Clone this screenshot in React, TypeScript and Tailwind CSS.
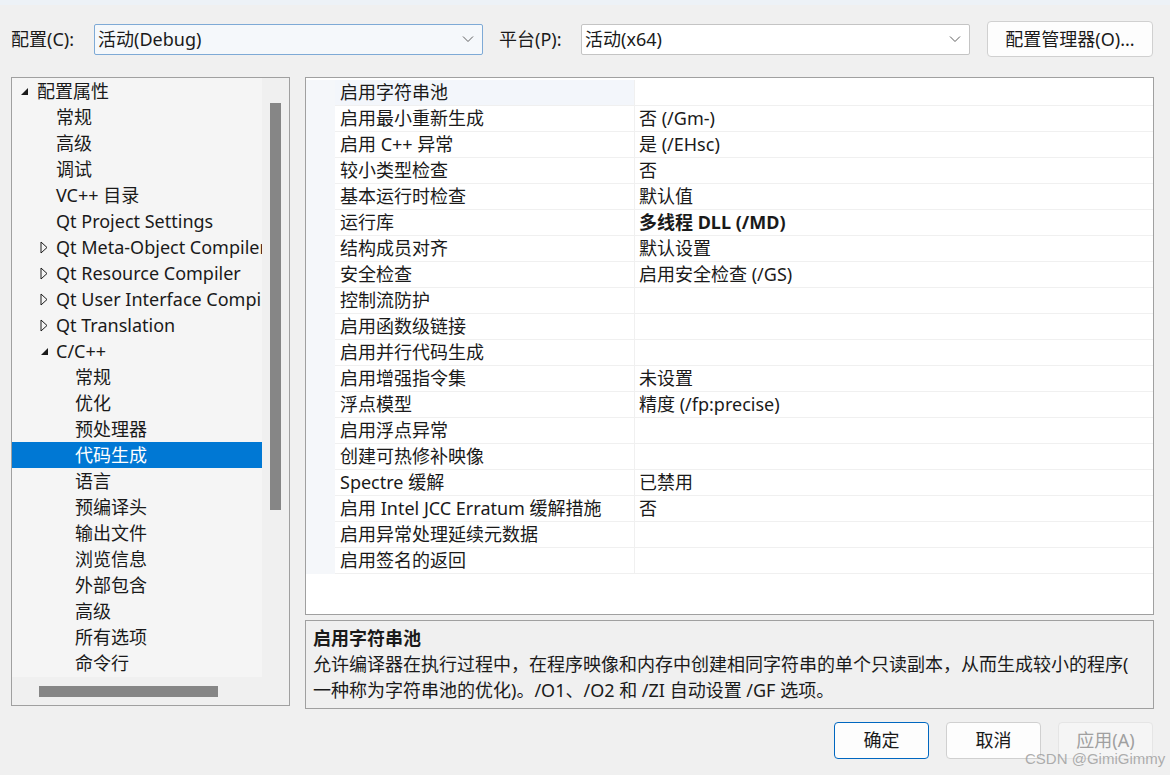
import React from 'react';

const font = { fontFamily: '"Noto Sans", "Noto Sans CJK SC", sans-serif' };

type TreeItem = { label: string; level: number; arrow?: 'open' | 'closed'; selected?: boolean };

const tree: TreeItem[] = [
    { label: '配置属性', level: 0, arrow: 'open' },
    { label: '常规', level: 1 },
    { label: '高级', level: 1 },
    { label: '调试', level: 1 },
    { label: 'VC++ 目录', level: 1 },
    { label: 'Qt Project Settings', level: 1 },
    { label: 'Qt Meta-Object Compiler', level: 1, arrow: 'closed' },
    { label: 'Qt Resource Compiler', level: 1, arrow: 'closed' },
    { label: 'Qt User Interface Compiler', level: 1, arrow: 'closed' },
    { label: 'Qt Translation', level: 1, arrow: 'closed' },
    { label: 'C/C++', level: 1, arrow: 'open' },
    { label: '常规', level: 2 },
    { label: '优化', level: 2 },
    { label: '预处理器', level: 2 },
    { label: '代码生成', level: 2, selected: true },
    { label: '语言', level: 2 },
    { label: '预编译头', level: 2 },
    { label: '输出文件', level: 2 },
    { label: '浏览信息', level: 2 },
    { label: '外部包含', level: 2 },
    { label: '高级', level: 2 },
    { label: '所有选项', level: 2 },
    { label: '命令行', level: 2 },
];

const props: { name: string; value: string; bold?: boolean }[] = [
    { name: '启用字符串池', value: '' },
    { name: '启用最小重新生成', value: '否 (/Gm-)' },
    { name: '启用 C++ 异常', value: '是 (/EHsc)' },
    { name: '较小类型检查', value: '否' },
    { name: '基本运行时检查', value: '默认值' },
    { name: '运行库', value: '多线程 DLL (/MD)', bold: true },
    { name: '结构成员对齐', value: '默认设置' },
    { name: '安全检查', value: '启用安全检查 (/GS)' },
    { name: '控制流防护', value: '' },
    { name: '启用函数级链接', value: '' },
    { name: '启用并行代码生成', value: '' },
    { name: '启用增强指令集', value: '未设置' },
    { name: '浮点模型', value: '精度 (/fp:precise)' },
    { name: '启用浮点异常', value: '' },
    { name: '创建可热修补映像', value: '' },
    { name: 'Spectre 缓解', value: '已禁用' },
    { name: '启用 Intel JCC Erratum 缓解措施', value: '否' },
    { name: '启用异常处理延续元数据', value: '' },
    { name: '启用签名的返回', value: '' },
];

function Chevron() {
    return (
        <svg width="12" height="8" viewBox="0 0 12 8" className="mr-[8px] shrink-0">
            <path d="M1 1.5 L6 6.5 L11 1.5" fill="none" stroke="#5f5f5f" strokeWidth="1" />
        </svg>
    );
}

function Combo({ text, focused }: { text: string; focused?: boolean }) {
    return (
        <div
            className={`w-[389px] h-[31px] flex items-center justify-between pl-[3px] rounded-[2px] border ${focused ? 'border-[#7eaad6] bg-[#f5f8fb]' : 'border-[#c4c4c4] bg-white'}`}
        >
            <span>{text}</span>
            <Chevron />
        </div>
    );
}

function Arrow({ kind }: { kind: 'open' | 'closed' }) {
    if (kind === 'open') {
        return (
            <svg width="9" height="9" viewBox="0 0 9 9" className="shrink-0">
                <path d="M8 1 L8 8 L1 8 Z" fill="#1a1a1a" />
            </svg>
        );
    }
    return (
        <svg width="8" height="13" viewBox="0 0 8 13" className="shrink-0">
            <path d="M1 1 L7 6.5 L1 12 Z" fill="none" stroke="#1a1a1a" strokeWidth="1" />
        </svg>
    );
}

// indent widths measured from the tree's left edge
const indent = ['w-[25px] pl-[8px]', 'w-[44px] pl-[28px]', 'w-[63px]'];

export default function App() {
    return (
        <div className="w-[1170px] h-[775px] bg-[#f0f0f0] text-[18px] text-[#1a1a1a] relative overflow-hidden" style={font}>
            <div className="h-[5px] bg-[#edf2f7]" />

            {/* toolbar */}
            <div className="mt-[16px] h-[36px] flex items-center">
                <span className="ml-[11px] w-[83px]">配置(C):</span>
                <Combo text="活动(Debug)" focused />
                <span className="ml-[16px] w-[82px]">平台(P):</span>
                <Combo text="活动(x64)" />
                <button className="ml-[17px] w-[166px] h-[36px] bg-[#fdfdfd] border border-[#d0d0d0] rounded-[4px] text-[18px]">
                    配置管理器(O)...
                </button>
            </div>

            <div className="mt-[20px] flex">
                {/* tree panel */}
                <div className="ml-[11px] w-[279px] h-[629px] border border-[#a0a0a0] flex flex-col">
                    <div className="flex flex-1 min-h-0">
                        <div className="w-[250px] bg-[#f5f5f5] overflow-hidden">
                            {tree.map((t, i) => (
                                <div
                                    key={i}
                                    className={`h-[26px] flex items-center whitespace-nowrap ${t.selected ? 'bg-[#0078d4] text-white' : ''}`}
                                >
                                    <div className={`shrink-0 flex items-center ${indent[t.level]}`}>
                                        {t.arrow && <Arrow kind={t.arrow} />}
                                    </div>
                                    <span className="shrink-0">{t.label}</span>
                                </div>
                            ))}
                        </div>
                        <div className="flex-1 bg-[#f0f0f0] flex justify-center pt-[25px]">
                            <div className="w-[11px] h-[407px] bg-[#868686]" />
                        </div>
                    </div>
                    <div className="h-[28px] bg-[#f0f0f0] flex items-center">
                        <div className="ml-[27px] w-[179px] h-[11px] bg-[#868686]" />
                    </div>
                </div>

                {/* right column */}
                <div className="ml-[15px] w-[849px] flex flex-col gap-[5px]">
                    <div className="h-[538px] bg-white border border-[#a0a0a0] pt-[2px]">
                        {props.map((p, i) => (
                            <div key={i} className="h-[26px] flex">
                                <div className="w-[29px] bg-[#f5f7fa]" />
                                <div
                                    className={`w-[299px] flex items-center pl-[5px] border-b border-[#f0f0f0] whitespace-nowrap ${i === 0 ? 'bg-[#f3f6fb]' : ''}`}
                                >
                                    {p.name}
                                </div>
                                <div
                                    className={`flex-1 flex items-center pl-[4px] border-b border-l border-[#f0f0f0] ${p.bold ? 'font-bold' : ''}`}
                                >
                                    {p.value}
                                </div>
                            </div>
                        ))}
                    </div>
                    <div className="h-[89px] border border-[#a0a0a0] bg-[#f0f0f0] px-[7px] pt-[4px] leading-[26px] overflow-hidden">
                        <div className="font-bold">启用字符串池</div>
                        <div className="whitespace-nowrap">
                            允许编译器在执行过程中，在程序映像和内存中创建相同字符串的单个只读副本，从而生成较小的程序(
                        </div>
                        <div className="whitespace-nowrap">一种称为字符串池的优化)。/O1、/O2 和 /ZI 自动设置 /GF 选项。</div>
                    </div>
                </div>
            </div>

            {/* bottom buttons */}
            <div className="mt-[13px] flex justify-end gap-[17px] pr-[17px]">
                <button className="w-[95px] h-[37px] bg-[#fdfdfd] border border-[#0067c0] rounded-[4px] text-[18px]">确定</button>
                <button className="w-[95px] h-[37px] bg-[#fdfdfd] border border-[#d0d0d0] rounded-[4px] text-[18px]">取消</button>
                <button className="w-[95px] h-[37px] bg-[#f5f5f5] border border-[#e5e5e5] rounded-[4px] text-[18px] text-[#a0a0a0]">
                    应用(A)
                </button>
            </div>

            <div className="absolute left-[1025px] top-[748px] text-[15px] text-[#9a9a9a]/80" style={{ fontFamily: '"Liberation Sans", sans-serif' }}>
                CSDN @GimiGimmy
            </div>
        </div>
    );
}
